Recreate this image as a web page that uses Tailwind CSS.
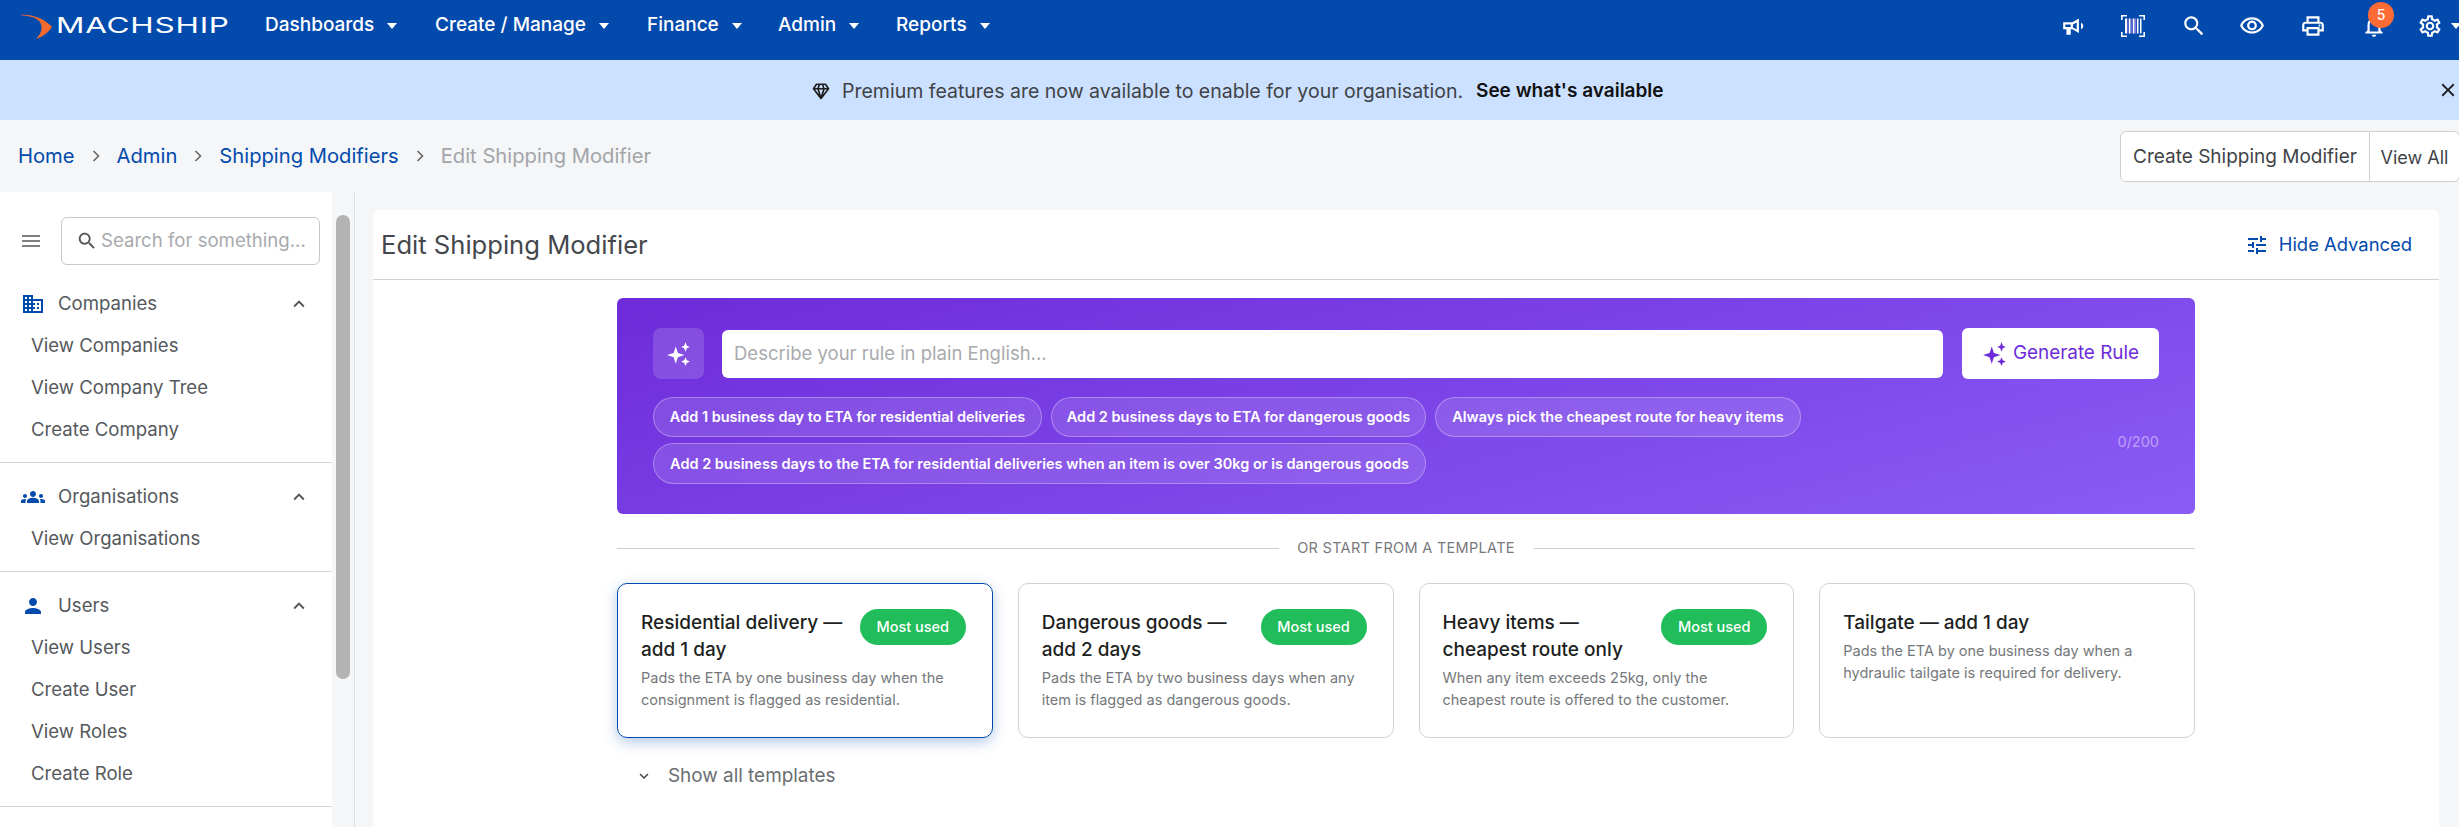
<!DOCTYPE html>
<html lang="en">
<head>
<meta charset="UTF-8">
<title>Edit Shipping Modifier</title>
<script src="https://cdn.jsdelivr.net/npm/@tailwindcss/browser@4"></script>
</head>
<body class="h-[827px] overflow-hidden bg-[#f4f6f8] font-['Inter',sans-serif] text-[#3f4347]">

<!-- top nav -->
<header class="h-[60px] pb-[9px] bg-[#034aad] flex items-center text-white">
  <div class="w-[265px] shrink-0 flex items-center pl-[19px]">
    <svg class="w-[34px] h-[36px] mr-[3px]" viewBox="19 7 34 36"><path d="M20 14C32 13 45 18 52 26 48 32 42 36 36 38 42 32 44 24 38 19 34 16 28 15 20 14z" fill="#f26a2e"/></svg>
    <span class="text-[21px] font-normal tracking-[0.5px] leading-none scale-x-[1.5] origin-left">MACHSHIP</span>
  </div>
  <nav class="flex items-center text-[19px] font-medium">
    <a class="flex items-center w-[170px]">Dashboards<span class="ml-[13px] border-x-[5px] border-t-[6px] border-x-transparent border-t-white"></span></a>
    <a class="flex items-center w-[212px]">Create / Manage<span class="ml-[13px] border-x-[5px] border-t-[6px] border-x-transparent border-t-white"></span></a>
    <a class="flex items-center w-[131px]">Finance<span class="ml-[13px] border-x-[5px] border-t-[6px] border-x-transparent border-t-white"></span></a>
    <a class="flex items-center w-[118px]">Admin<span class="ml-[13px] border-x-[5px] border-t-[6px] border-x-transparent border-t-white"></span></a>
    <a class="flex items-center">Reports<span class="ml-[13px] border-x-[5px] border-t-[6px] border-x-transparent border-t-white"></span></a>
  </nav>
  <div class="ml-auto flex items-center fill-white">
    <svg class="w-[26px] h-[26px] mr-[33px]" viewBox="0 0 24 24"><path d="M2 8.500v6.500h3v5h4v-5h1.500l6 3.500V5L10.500 8.500H2zm2 2h5v2.500H4v-2.500zm7 .2 3.500-2v6.600l-3.500-2v-2.600zM18.500 9v6c1.200-.6 2-1.700 2-3s-.8-2.400-2-3z"/></svg>
    <svg class="w-[26px] h-[26px] mr-[35px]" viewBox="0 0 26 26"><path d="M1 7V2h6v1.600H2.600V7H1zm18-5h6v5h-1.600V3.600H19V2zM1 19h1.600v3.400H7V24H1v-5zm24 0v5h-6v-1.600h4.400V19H25z"/><path d="M5 5.500h2v15H5zM9 5.500h1.500v15H9zM13 5.500h1.500v15H13zM17 5.500h1.500v15H17zM20 5.500h1.500v15H20z"/><path d="M7.500 5.500h1v15h-1zM11.500 5.500h1v15h-1zM15.200 5.500h1v15h-1z" fill="#b57cf0"/></svg>
    <svg class="w-[26px] h-[26px] mr-[32px]" viewBox="0 0 24 24"><path d="M15.500 14h-.79l-.28-.27C15.410 12.590 16 11.110 16 9.500 16 5.910 13.090 3 9.500 3S3 5.910 3 9.500 5.910 16 9.500 16c1.610 0 3.090-.59 4.230-1.570l.27.28v.79l5 4.990L20.490 19l-4.990-5zm-6 0C7.010 14 5 11.990 5 9.500S7.010 5 9.500 5 14 7.010 14 9.500 11.990 14 9.500 14z"/></svg>
    <svg class="w-[26px] h-[26px] mr-[35px]" viewBox="0 0 24 24"><path d="M12 6c3.790 0 7.170 2.130 8.820 5.500C19.170 14.870 15.790 17 12 17s-7.170-2.130-8.820-5.500C4.830 8.130 8.210 6 12 6m0-2C7 4 2.730 7.110 1 11.500 2.730 15.890 7 19 12 19s9.270-3.110 11-7.500C21.270 7.110 17 4 12 4zm0 5c1.380 0 2.500 1.120 2.500 2.500S13.380 14 12 14s-2.500-1.120-2.500-2.500S10.620 9 12 9m0-2c-2.480 0-4.500 2.020-4.500 4.500S9.520 16 12 16s4.500-2.020 4.500-4.500S14.480 7 12 7z"/></svg>
    <svg class="w-[26px] h-[26px] mr-[35px]" viewBox="0 0 24 24"><path d="M19 8h-1V3H6v5H5c-1.660 0-3 1.340-3 3v6h4v4h12v-4h4v-6c0-1.660-1.340-3-3-3zM8 5h8v3H8V5zm8 12v2H8v-4h8v2zm2-2v-2H6v2H4v-4c0-.55.45-1 1-1h14c.55 0 1 .45 1 1v4h-2z"/><circle cx="18" cy="11.500" r="1"/></svg>
    <div class="relative w-[26px] h-[26px] mr-[30px]">
      <svg class="w-[26px] h-[26px]" viewBox="0 0 24 24"><path d="M12 22c1.100 0 2-.9 2-2h-4c0 1.100.9 2 2 2zm6-6v-5c0-3.070-1.630-5.640-4.500-6.320V4c0-.83-.67-1.500-1.500-1.500s-1.500.67-1.500 1.500v.68C7.640 5.360 6 7.920 6 11v5l-2 2v1h16v-1l-2-2zm-2 1H8v-6c0-2.480 1.510-4.500 4-4.500s4 2.020 4 4.500v6z"/></svg>
      <span class="absolute left-[7px] -top-[11px] w-[26px] h-[26px] rounded-full bg-[#ff6b35] text-[14px] font-medium flex items-center justify-center">5</span>
    </div>
    <svg class="w-[26px] h-[26px]" viewBox="0 0 24 24"><path d="M19.430 12.980c.04-.32.07-.64.07-.98 0-.34-.03-.66-.07-.98l2.110-1.650c.19-.15.24-.42.12-.64l-2-3.460c-.09-.16-.26-.25-.44-.25-.06 0-.12.01-.17.03l-2.490 1c-.52-.4-1.080-.73-1.690-.98l-.38-2.650C14.460 2.180 14.250 2 14 2h-4c-.25 0-.46.18-.49.42l-.38 2.650c-.61.25-1.170.59-1.690.98l-2.490-1c-.06-.02-.12-.03-.18-.03-.17 0-.34.09-.43.25l-2 3.460c-.13.22-.07.49.12.64l2.110 1.650c-.04.32-.07.65-.07.98 0 .33.03.66.07.98l-2.110 1.650c-.19.15-.24.42-.12.64l2 3.460c.09.16.26.25.44.25.06 0 .12-.01.17-.03l2.490-1c.52.4 1.080.73 1.690.98l.38 2.650c.03.24.24.42.49.42h4c.25 0 .46-.18.49-.42l.38-2.650c.61-.25 1.170-.59 1.690-.98l2.490 1c.06.02.12.03.18.03.17 0 .34-.09.43-.25l2-3.460c.12-.22.07-.49-.12-.64l-2.110-1.650zm-1.980-1.710c.04.31.05.52.05.73 0 .21-.02.43-.05.73l-.14 1.130.89.7 1.080.84-.7 1.210-1.270-.51-1.040-.42-.9.68c-.43.32-.84.56-1.250.73l-1.060.43-.16 1.130-.2 1.350h-1.400l-.19-1.350-.16-1.130-1.060-.43c-.43-.18-.83-.41-1.230-.71l-.91-.7-1.060.43-1.270.51-.7-1.210 1.080-.84.89-.7-.14-1.130c-.03-.31-.05-.54-.05-.74s.02-.43.05-.73l.14-1.130-.89-.7-1.080-.84.7-1.210 1.270.51 1.040.42.9-.68c.43-.32.84-.56 1.250-.73l1.060-.43.16-1.130.2-1.350h1.390l.19 1.350.16 1.130 1.060.43c.43.18.83.41 1.230.71l.91.7 1.060-.43 1.270-.51.7 1.210-1.070.85-.89.7.14 1.130zM12 8c-2.210 0-4 1.790-4 4s1.790 4 4 4 4-1.790 4-4-1.790-4-4-4zm0 6c-1.100 0-2-.9-2-2s.9-2 2-2 2 .9 2 2-.9 2-2 2z"/></svg>
    <span class="ml-[8px] mr-[-2px] border-x-[5px] border-t-[6px] border-x-transparent border-t-white"></span>
  </div>
</header>

<!-- premium banner -->
<div class="relative h-[60px] pt-[3px] bg-[#cce0ff] flex items-center pl-[812px] text-[19.5px]">
  <svg class="w-[18px] h-[18px] mr-[12px] -mt-[2px]" viewBox="0 0 24 24" fill="none" stroke="#1d1d1d" stroke-width="2.200" stroke-linejoin="round"><path d="M6 3h12l4 6-10 13L2 9zM2 9h20M8 9l4 13 4-13M8 9l2-6M16 9l-2-6"/></svg>
  <span>Premium features are now available to enable for your organisation.</span>
  <span class="ml-[13px] text-[19px] font-semibold text-[#111]">See what's available</span>
  <button class="absolute right-0 top-[19px]"><svg class="w-[22px] h-[22px]" viewBox="0 0 24 24" fill="#1d1d1d"><path d="M19 6.410 17.590 5 12 10.590 6.410 5 5 6.410 10.590 12 5 17.590 6.410 19 12 13.410 17.590 19 19 17.590 13.410 12z"/></svg></button>
</div>

<!-- breadcrumb row -->
<div class="h-[72px] flex items-center justify-between pl-[18px] text-[20.2px]">
  <div class="flex items-center pt-[1px] text-[#034aad]">
    <a>Home</a>
    <svg class="w-[14px] h-[14px] mx-[14px] text-[#666]" viewBox="0 0 14 14" fill="none" stroke="currentColor" stroke-width="1.600"><path d="M4.500 2l5 5-5 5"/></svg>
    <a>Admin</a>
    <svg class="w-[14px] h-[14px] mx-[14px] text-[#666]" viewBox="0 0 14 14" fill="none" stroke="currentColor" stroke-width="1.600"><path d="M4.500 2l5 5-5 5"/></svg>
    <a>Shipping Modifiers</a>
    <svg class="w-[14px] h-[14px] mx-[14px] text-[#666]" viewBox="0 0 14 14" fill="none" stroke="currentColor" stroke-width="1.600"><path d="M4.500 2l5 5-5 5"/></svg>
    <span class="text-[#a3a5a8]">Edit Shipping Modifier</span>
  </div>
  <div class="flex h-[51px] w-[340px] -mr-[1px] bg-white border border-[#cfcfcf] rounded-[6px] text-[18px] items-stretch">
    <a class="w-[249px] pt-[2px] border-r border-[#cfcfcf] flex items-center justify-center text-[19px]">Create Shipping Modifier</a>
    <a class="flex-1 pt-[2px] flex items-center justify-center">View All</a>
  </div>
</div>

<div class="flex h-[635px]">
  <!-- sidebar -->
  <aside class="w-[332px] shrink-0 bg-white text-[18.6px] text-[#55595d]">
    <div class="flex items-center h-[58px] pt-[20px] box-content pl-[22px]">
      <svg class="w-[18px] h-[14px]" viewBox="0 0 18 14" stroke="#555" stroke-width="1.300"><path d="M0 2h18M0 7h18M0 12h18"/></svg>
      <div class="ml-[21px] w-[259px] h-[48px] border border-[#c9c9c9] rounded-[6px] flex items-center pl-[14px] text-[#a8aaad] whitespace-nowrap">
        <svg class="w-[22px] h-[22px] mr-[3px]" viewBox="0 0 24 24" fill="#555"><path d="M15.500 14h-.79l-.28-.27C15.410 12.590 16 11.110 16 9.500 16 5.910 13.090 3 9.500 3S3 5.910 3 9.500 5.910 16 9.500 16c1.610 0 3.090-.59 4.230-1.570l.27.28v.79l5 4.990L20.490 19l-4.990-5zm-6 0C7.010 14 5 11.990 5 9.500S7.010 5 9.500 5 14 7.010 14 9.500 11.990 14 9.500 14z"/></svg>
        Search for something...
      </div>
    </div>
    <div class="border-b border-[#d4d4d4] pb-[12px]">
      <div class="flex items-center h-[42px] pt-[2px] mt-[12px] pl-[22px] pr-[22px]">
        <svg class="w-[24px] h-[24px] -ml-[1px]" viewBox="0 0 24 24" fill="#034aad"><path d="M12 7V3H2v18h20V7H12zM6 19H4v-2h2v2zm0-4H4v-2h2v2zm0-4H4V9h2v2zm0-4H4V5h2v2zm4 12H8v-2h2v2zm0-4H8v-2h2v2zm0-4H8V9h2v2zm0-4H8V5h2v2zm10 12h-8v-2h2v-2h-2v-2h2v-2h-2V9h8v10zm-2-8h-2v2h2v-2zm0 4h-2v2h2v-2z"/></svg>
        <span class="ml-[13px]">Companies</span>
        <svg class="w-[22px] h-[22px] ml-auto" viewBox="0 0 24 24" fill="#555"><path d="M12 8l-6 6 1.410 1.410L12 10.830l4.590 4.580L18 14z"/></svg>
      </div>
      <a class="flex items-center h-[42px] pt-[2px] pl-[31px]">View Companies</a>
      <a class="flex items-center h-[42px] pt-[2px] pl-[31px]">View Company Tree</a>
      <a class="flex items-center h-[42px] pt-[2px] pl-[31px]">Create Company</a>
    </div>
    <div class="border-b border-[#d4d4d4] pb-[12px]">
      <div class="flex items-center h-[42px] pt-[2px] mt-[12px] pl-[22px] pr-[22px]">
        <svg class="w-[24px] h-[24px] -ml-[1px]" viewBox="0 0 24 24" fill="#034aad"><path d="M12 12.750c1.630 0 3.070.39 4.240.9 1.080.48 1.760 1.560 1.760 2.730V18H6v-1.610c0-1.180.68-2.260 1.760-2.730 1.170-.52 2.610-.91 4.240-.91zM4 13c1.100 0 2-.9 2-2s-.9-2-2-2-2 .9-2 2 .9 2 2 2zm1.130 1.100c-.37-.06-.74-.1-1.130-.1-.99 0-1.930.21-2.780.58C.48 14.900 0 15.620 0 16.430V18h4.500v-1.610c0-.83.23-1.610.63-2.290zM20 13c1.100 0 2-.9 2-2s-.9-2-2-2-2 .9-2 2 .9 2 2 2zm4 3.430c0-.81-.48-1.530-1.220-1.850-.85-.37-1.790-.58-2.780-.58-.39 0-.76.04-1.130.1.4.68.63 1.460.63 2.290V18H24v-1.570zM12 6c1.660 0 3 1.340 3 3s-1.340 3-3 3-3-1.340-3-3 1.340-3 3-3z"/></svg>
        <span class="ml-[13px]">Organisations</span>
        <svg class="w-[22px] h-[22px] ml-auto" viewBox="0 0 24 24" fill="#555"><path d="M12 8l-6 6 1.410 1.410L12 10.830l4.590 4.580L18 14z"/></svg>
      </div>
      <a class="flex items-center h-[42px] pt-[2px] pl-[31px]">View Organisations</a>
    </div>
    <div class="border-b border-[#d4d4d4] pb-[12px]">
      <div class="flex items-center h-[42px] pt-[2px] mt-[12px] pl-[22px] pr-[22px]">
        <svg class="w-[24px] h-[24px] -ml-[1px]" viewBox="0 0 24 24" fill="#034aad"><path d="M12 12c2.210 0 4-1.790 4-4s-1.790-4-4-4-4 1.790-4 4 1.790 4 4 4zm0 2c-2.670 0-8 1.340-8 4v2h16v-2c0-2.660-5.330-4-8-4z"/></svg>
        <span class="ml-[13px]">Users</span>
        <svg class="w-[22px] h-[22px] ml-auto" viewBox="0 0 24 24" fill="#555"><path d="M12 8l-6 6 1.410 1.410L12 10.830l4.590 4.580L18 14z"/></svg>
      </div>
      <a class="flex items-center h-[42px] pt-[2px] pl-[31px]">View Users</a>
      <a class="flex items-center h-[42px] pt-[2px] pl-[31px]">Create User</a>
      <a class="flex items-center h-[42px] pt-[2px] pl-[31px]">View Roles</a>
      <a class="flex items-center h-[42px] pt-[2px] pl-[31px]">Create Role</a>
    </div>
  </aside>

  <!-- sidebar scrollbar -->
  <div class="w-[23px] shrink-0 pl-[4px] pt-[23px] border-r border-[#dcdfe2]">
    <div class="w-[14px] h-[464px] bg-[#b3b3b3] rounded-full"></div>
  </div>

  <!-- main card -->
  <main class="ml-[18px] mt-[18px] w-[2066px] h-[640px] bg-white rounded-t-[6px]">
    <div class="h-[70px] pt-[1px] border-b border-[#d2d2d2] flex items-center justify-between pl-[8px] pr-[27px]">
      <h1 class="text-[25.6px] text-[#44484c]">Edit Shipping Modifier</h1>
      <a class="flex items-center text-[18.4px] text-[#034aad]">
        <svg class="w-[24px] h-[24px] mr-[10px]" viewBox="0 0 24 24" fill="#034aad"><path d="M3 17v2h6v-2H3zM3 5v2h10V5H3zm10 16v-2h8v-2h-8v-2h-2v6h2zM7 9v2H3v2h4v2h2V9H7zm14 4v-2H11v2h10zm-6-4h2V7h4V5h-4V3h-2v6z"/></svg>
        Hide Advanced
      </a>
    </div>

    <div class="ml-[244px] w-[1578px]">
      <!-- AI prompt panel -->
      <section class="mt-[18px] h-[216px] rounded-[6px] bg-[linear-gradient(165deg,#6d2bd9,#8b5cf6)] px-[36px] pt-[30px]">
        <div class="flex items-center">
          <div class="w-[51px] h-[51px] rounded-[8px] bg-white/15 flex items-center justify-center">
            <svg class="w-[26px] h-[26px]" viewBox="0 0 24 24" fill="white"><path d="M9 5l2 6 6 2-6 2-2 6-2-6-6-2 6-2zM18 1l1.200 3.300L22 5.500l-2.800 1.200L18 10l-1.200-3.300L14 5.500l2.800-1.200zM18 15l1.200 2.800L22 19l-2.800 1.200L18 23l-1.200-2.800L14 19l2.800-1.200z"/></svg>
          </div>
          <div class="ml-[18px] w-[1221px] h-[48px] bg-white rounded-[6px] flex items-center pl-[12px] text-[18.5px] text-[#a8aaad]">Describe your rule in plain English...</div>
          <button class="ml-[19px] w-[197px] h-[51px] bg-white rounded-[6px] flex items-center justify-center text-[18.9px] text-[#6d2bd9]">
            <svg class="w-[26px] h-[26px] mr-[5px]" viewBox="0 0 24 24" fill="#6d2bd9"><path d="M9 5l2 6 6 2-6 2-2 6-2-6-6-2 6-2zM18 1l1.200 3.300L22 5.500l-2.800 1.200L18 10l-1.200-3.300L14 5.500l2.800-1.200zM18 15l1.200 2.800L22 19l-2.800 1.200L18 23l-1.200-2.800L14 19l2.800-1.200z"/></svg>
            Generate Rule
          </button>
        </div>
        <div class="flex justify-between mt-[18px]">
          <div class="w-[1160px] flex flex-wrap gap-x-[9px] gap-y-[6px] text-[14.5px] font-semibold text-white">
            <span class="h-[40px] w-[389px] rounded-full border border-white/30 bg-white/12 flex items-center justify-center">Add 1 business day to ETA for residential deliveries</span>
            <span class="h-[40px] w-[375px] rounded-full border border-white/30 bg-white/12 flex items-center justify-center">Add 2 business days to ETA for dangerous goods</span>
            <span class="h-[40px] w-[366px] rounded-full border border-white/30 bg-white/12 flex items-center justify-center">Always pick the cheapest route for heavy items</span>
            <span class="h-[41px] w-[773px] rounded-full border border-white/30 bg-white/12 flex items-center justify-center">Add 2 business days to the ETA for residential deliveries when an item is over 30kg or is dangerous goods</span>
          </div>
          <span class="mt-[34px] text-[14.5px] text-white/45">0/200</span>
        </div>
      </section>

      <!-- divider -->
      <div class="flex items-center mt-[24px] text-[14.5px] text-[#77797c] tracking-[0.3px] h-[20px]">
        <div class="flex-1 h-px bg-[#cfcfcf]"></div>
        <span class="w-[255px] text-center">OR START FROM A TEMPLATE</span>
        <div class="flex-1 h-px bg-[#cfcfcf]"></div>
      </div>

      <!-- templates -->
      <div class="grid grid-cols-4 gap-[25px] mt-[25px]">
        <div class="h-[155px] rounded-[10px] border border-[#034aad] shadow-[0_4px_14px_rgba(3,74,173,0.3)] pl-[23px] pr-[26px] pt-[25px]">
          <div class="flex justify-between items-start">
            <h3 class="w-[212px] text-[19px] leading-[27px] font-medium text-[#1d1f21]">Residential delivery — add 1 day</h3>
            <span class="w-[106px] h-[36px] rounded-full bg-[#20bd5a] text-white text-[14.5px] font-medium flex items-center justify-center">Most used</span>
          </div>
          <p class="mt-[4px] text-[14.5px] leading-[22px] text-[#75787b]">Pads the ETA by one business day when the consignment is flagged as residential.</p>
        </div>
        <div class="h-[155px] rounded-[10px] border border-[#d2d2d2] pl-[23px] pr-[26px] pt-[25px]">
          <div class="flex justify-between items-start">
            <h3 class="w-[212px] text-[19px] leading-[27px] font-medium text-[#1d1f21]">Dangerous goods — add 2 days</h3>
            <span class="w-[106px] h-[36px] rounded-full bg-[#20bd5a] text-white text-[14.5px] font-medium flex items-center justify-center">Most used</span>
          </div>
          <p class="mt-[4px] text-[14.5px] leading-[22px] text-[#75787b]">Pads the ETA by two business days when any item is flagged as dangerous goods.</p>
        </div>
        <div class="h-[155px] rounded-[10px] border border-[#d2d2d2] pl-[23px] pr-[26px] pt-[25px]">
          <div class="flex justify-between items-start">
            <h3 class="w-[212px] text-[19px] leading-[27px] font-medium text-[#1d1f21]">Heavy items — cheapest route only</h3>
            <span class="w-[106px] h-[36px] rounded-full bg-[#20bd5a] text-white text-[14.5px] font-medium flex items-center justify-center">Most used</span>
          </div>
          <p class="mt-[4px] text-[14.5px] leading-[22px] text-[#75787b]">When any item exceeds 25kg, only the cheapest route is offered to the customer.</p>
        </div>
        <div class="h-[155px] rounded-[10px] border border-[#d2d2d2] pl-[23px] pr-[26px] pt-[25px]">
          <h3 class="text-[19px] leading-[27px] font-medium text-[#1d1f21]">Tailgate — add 1 day</h3>
          <p class="mt-[4px] text-[14.5px] leading-[22px] text-[#75787b]">Pads the ETA by one business day when a hydraulic tailgate is required for delivery.</p>
        </div>
      </div>

      <a class="flex items-center mt-[24px] pl-[18px] text-[18.9px] text-[#6b6e71]">
        <svg class="w-[18px] h-[18px] mr-[15px]" viewBox="0 0 24 24" fill="#444"><path d="M16.590 8.590 12 13.170 7.410 8.590 6 10l6 6 6-6z"/></svg>
        Show all templates
      </a>
    </div>
  </main>
</div>
</body>
</html>
